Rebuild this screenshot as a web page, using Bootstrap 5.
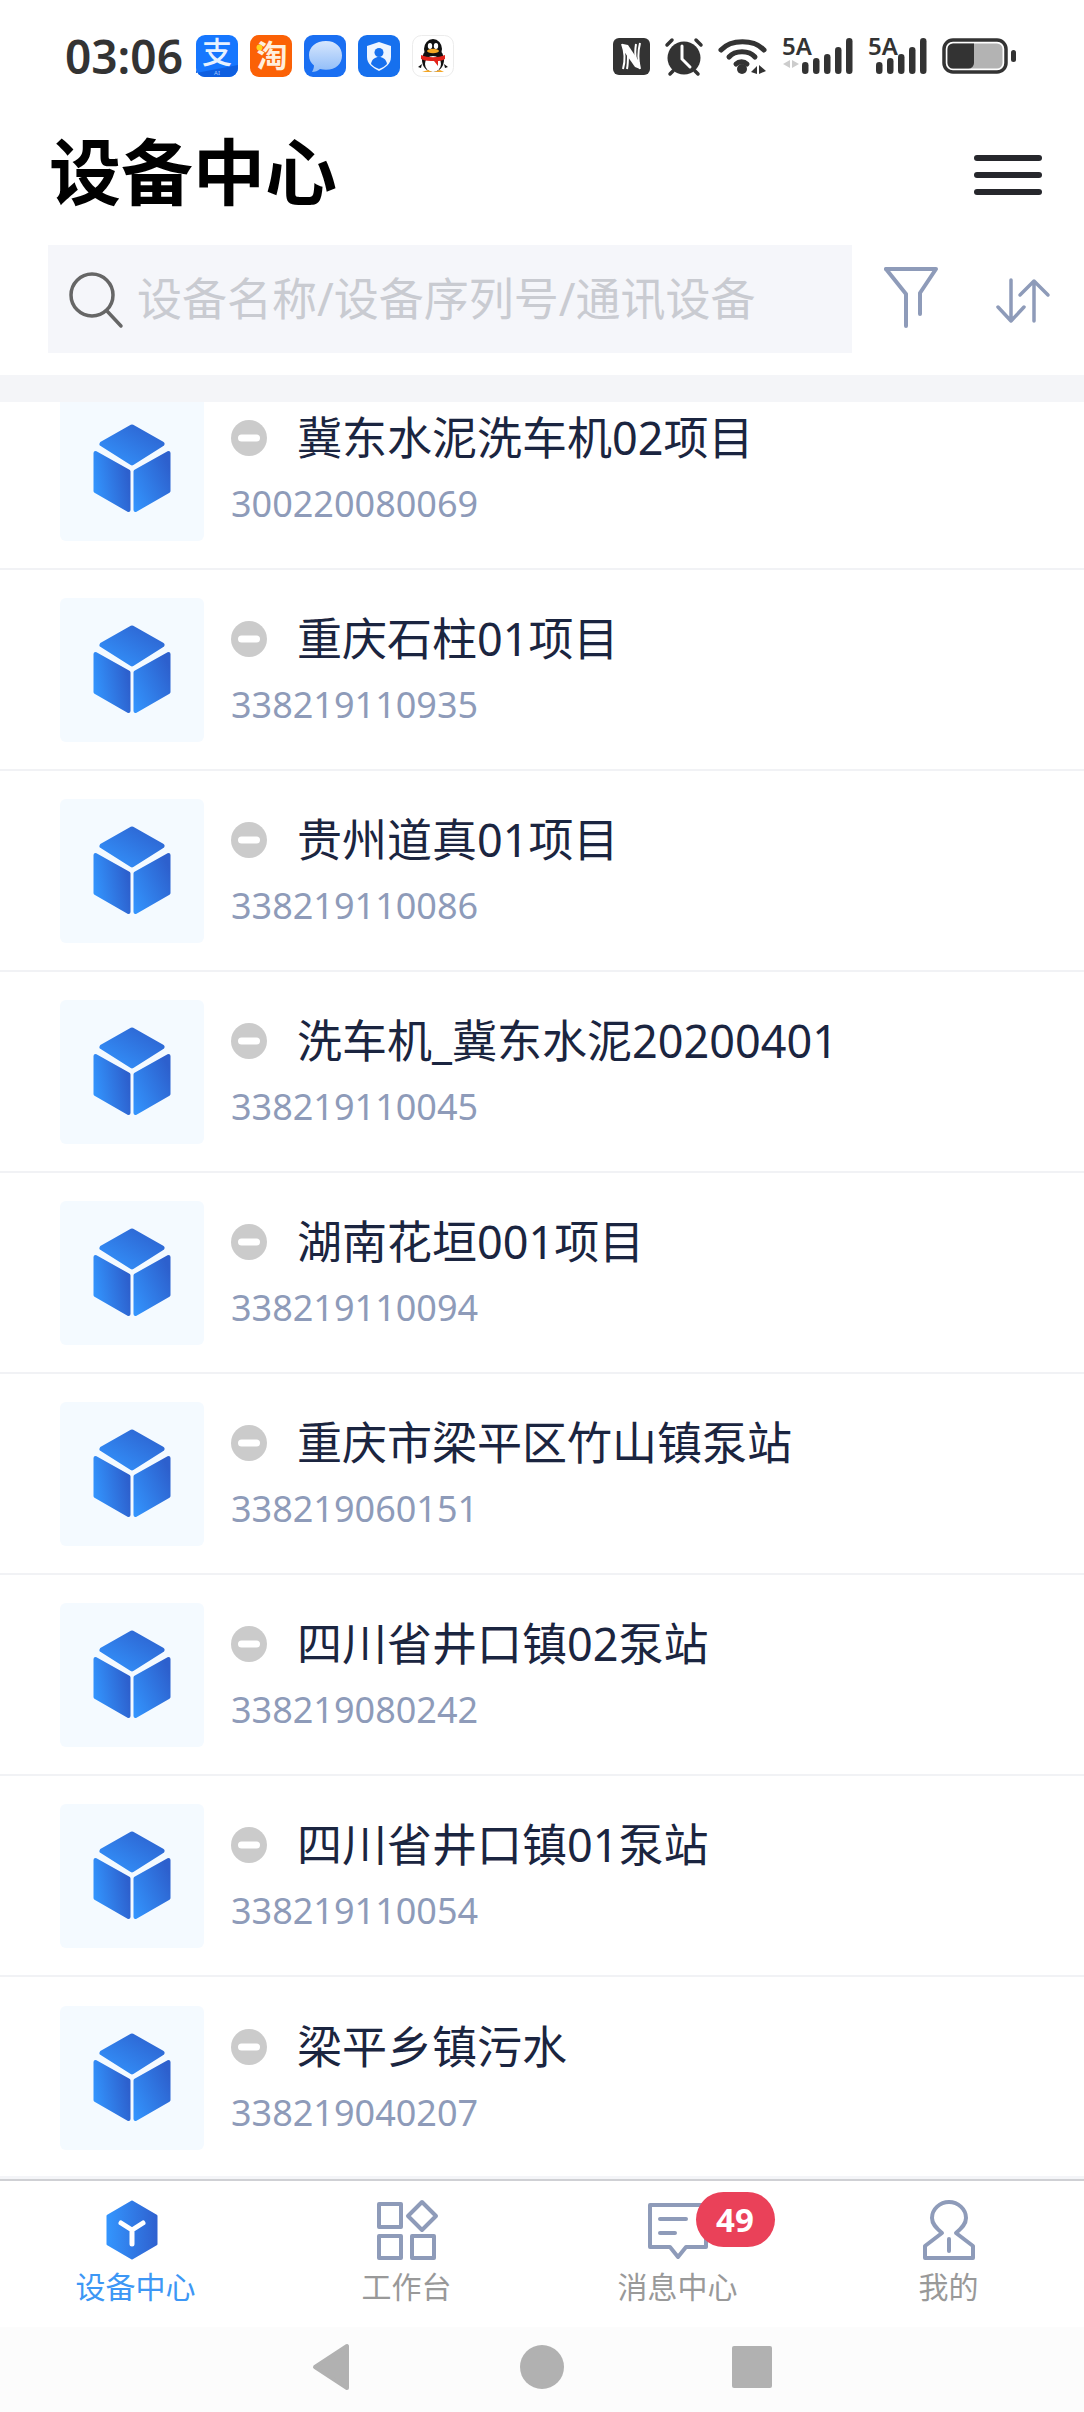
<!DOCTYPE html>
<html lang="zh">
<head>
  <meta charset="UTF-8" />
  <link rel="stylesheet" href="https://cdn.jsdelivr.net/npm/bootstrap@5.3.3/dist/css/bootstrap.min.css">
  <script src="https://cdn.jsdelivr.net/npm/bootstrap@5.3.3/dist/js/bootstrap.bundle.min.js"></script>
  <title>设备中心</title>
  <style>
    body { background: #fff; font-family: "Noto Sans", "Noto Sans CJK SC", sans-serif; overflow: hidden; }
    svg { overflow: visible; }
    .phone { width: 1084px; height: 2412px; }
    .status-bar { height: 112px; padding: 0 67px 0 65px; color: #333; }
    .status-time { font-size: 46px; font-weight: 600; width: 131px; line-height: 1; }
    .app-ico { width: 42px; height: 42px; margin-right: 12px; display: block; }
    .sys-ico { display: block; margin-left: 15px; }
    .title-bar { height: 133px; padding: 0 42px 16px 49px; }
    .page-title { font-size: 72px; font-weight: 700; color: #000; margin: 0; line-height: 1; }
    .menu-btn { width: 68px; margin-top: 8px; }
    .menu-btn span { display: block; height: 6px; border-radius: 3px; background: #26272c; margin: 11px 0; }
    .search-row { padding: 0 34px 0 48px; height: 130px; }
    .search-box { width: 804px; height: 108px; background: #f5f6fa; padding-left: 20px; }
    .search-text { font-size: 45px; color: #c9cbd1; margin-left: 13px; line-height: 1; padding-bottom: 2px; }
    .filter-ico { margin-top: 21px; margin-left: auto; }
    .sort-ico { margin-top: 34px; margin-left: 58px; }
    .strip { height: 27px; background: #f4f5f8; }
    .dev-list { height: 1777px; overflow: hidden; border-bottom: 3px solid #f4f5f8; }
    .dev-inner { margin-top: -33px; }
    .dev-row { height: 201px; padding: 0 0 0 60px; border-radius: 0; }
    .dev-row.list-group-item { border-width: 0 0 2px; border-color: #f1f2f5; }
    .cube-box { width: 144px; height: 144px; background: #f4faff; border-radius: 6px; }
    .dev-info { margin-left: 27px; padding-bottom: 4px; }
    .dev-name { font-size: 45px; color: #1b2540; line-height: 60px; margin-left: 30px; }
    .dev-sn { font-size: 36px; color: #8e9bb9; line-height: 44px; margin-top: 14px; }
    .tab-bar { height: 148px; border-top: 2px solid #cfd0d4; background: #fff; }
    .tab-col { padding-top: 19px; }
    .tab-ico { height: 60px; }
    .hex-ico { margin-right: 7px; }
    .tab-label { font-size: 30px; color: #999; line-height: 40px; margin-top: 7px; }
    .tab-label.on { color: #3d97f5; }
    .msg-badge { left: 48px; top: -8px; width: 79px; height: 55px; background: #ea4159; font-size: 33px; font-weight: 700; line-height: 55px; padding: 0; border-radius: 28px; }
    .sys-nav { height: 85px; background: #fcfcfc; padding-bottom: 6px; }
    .nav-left { margin-left: 312px; }
    .nav-mid { margin-left: 170px; }
    .nav-right { margin-left: 168px; }
  </style>
</head>
<body>
  <svg width="0" height="0" class="position-absolute">
    <defs>
      <linearGradient id="cubeTop" x1="0" y1="1" x2="1" y2="0"><stop offset="0" stop-color="#3394fd"/><stop offset="1" stop-color="#2d60cd"/></linearGradient>
      <linearGradient id="cubeLeft" x1="0" y1="0.75" x2="1" y2="0.45"><stop offset="0" stop-color="#3394fd"/><stop offset="1" stop-color="#2d60cd"/></linearGradient>
      <linearGradient id="cubeRight" x1="0" y1="1" x2="1" y2="0.2"><stop offset="0" stop-color="#3394fd"/><stop offset="1" stop-color="#2d60cd"/></linearGradient>
      <linearGradient id="hexFill" x1="0" y1="0" x2="1" y2="0"><stop offset="0" stop-color="#3394fd"/><stop offset="1" stop-color="#2f62d0"/></linearGradient>
      <linearGradient id="bub" x1="0" y1="0" x2="0" y2="1"><stop offset="0" stop-color="#d6e6fd"/><stop offset="1" stop-color="#8fbcf8"/></linearGradient>
      <symbol id="cube" viewBox="0 0 78 90">
        <path d="M39 3 69 20 39 39 9 20Z" fill="url(#cubeTop)" stroke="url(#cubeTop)" stroke-width="5" stroke-linejoin="round"/>
        <path d="M2.500 29 35.500 47.500V86L2.500 67Z" fill="url(#cubeLeft)" stroke="url(#cubeLeft)" stroke-width="4" stroke-linejoin="round"/>
        <path d="M75.500 29 42.500 47.500V86L75.500 67Z" fill="url(#cubeRight)" stroke="url(#cubeRight)" stroke-width="4" stroke-linejoin="round"/>
      </symbol>
      <symbol id="minus" viewBox="0 0 36 36">
        <circle cx="18" cy="18" r="18" fill="#cbcbcb"/>
        <rect x="7" y="14.500" width="22" height="7" rx="3.500" fill="#fff"/>
      </symbol>
      <symbol id="signal" viewBox="0 0 51 36">
        <rect x="0" y="24" width="6.500" height="12" rx="3.250"/><rect x="11" y="20" width="6.500" height="16" rx="3.250"/><rect x="22" y="16" width="6.500" height="20" rx="3.250"/><rect x="33" y="9" width="6.500" height="27" rx="3.250"/><rect x="44" y="0" width="6.500" height="36" rx="3.250"/>
      </symbol>
    </defs>
  </svg>

  <div class="phone d-flex flex-column">
    <!-- status bar -->
    <div class="status-bar d-flex align-items-center">
      <div class="status-time">03:06</div>
      <svg class="app-ico" viewBox="0 0 42 42"><rect width="42" height="42" rx="9" fill="#1677ff"/><path d="M0 38 42 30V33a9 9 0 0 1-9 9H9a9 9 0 0 1-9-9Z" fill="#0f5fe0"/><text x="21" y="28" font-size="30" fill="#e8f2ff" text-anchor="middle" font-family="Noto Sans CJK SC" font-weight="500">支</text><text x="21" y="40" font-size="6" fill="#a8c8ff" text-anchor="middle" font-family="Noto Sans">AI</text></svg>
      <svg class="app-ico" viewBox="0 0 42 42"><rect width="42" height="42" rx="9" fill="#fb6106"/><text x="22" y="32" font-size="31" font-weight="700" fill="#ffeedd" text-anchor="middle" font-family="Noto Sans CJK SC">淘</text><circle cx="9.500" cy="12.500" r="3" fill="#ffd21e"/></svg>
      <svg class="app-ico" viewBox="0 0 42 42"><rect width="42" height="42" rx="9" fill="#1a6ff2"/><path d="M22 6C12 6 5 12 5 20c0 5 2 8 5 10.500C10 33 9 35 8 37c3 0 6-1 8-3 2 .5 4 .8 6 .8 10 0 16-6 16-14.300S32 6 22 6Z" fill="url(#bub)"/></svg>
      <svg class="app-ico" viewBox="0 0 42 42"><rect width="42" height="42" rx="9" fill="#1670ee"/><path d="M21 7 33 11V22C33 29 27 33 21 36 15 33 9 29 9 22V11Z" fill="#eef5ff"/><circle cx="21" cy="17.500" r="4.500" fill="#1670ee"/><path d="M13 29c1-5 4-7 8-7s7 2 8 7c-2 2-5 4-8 5-3-1-6-3-8-5Z" fill="#1670ee"/></svg>
      <svg class="app-ico" viewBox="0 0 42 42"><rect x=".5" y=".5" width="41" height="41" rx="9" fill="#fff" stroke="#ececec"/><ellipse cx="21" cy="25" rx="11" ry="12" fill="#111"/><ellipse cx="21" cy="14" rx="9" ry="10" fill="#111"/><path d="M10 29 6 32 9 33ZM32 29 36 32 33 33Z" fill="#111"/><ellipse cx="21" cy="29" rx="8" ry="8" fill="#fff"/><ellipse cx="18" cy="11" rx="2.200" ry="3" fill="#fff"/><ellipse cx="24" cy="11" rx="2.200" ry="3" fill="#fff"/><ellipse cx="21" cy="16" rx="6" ry="2.200" fill="#f5a623"/><path d="M9 20C16 23 26 23 33 20L33 24C29 26 27 26 26 26V31L22 26C18 26 13 26 9 24Z" fill="#e2231a"/><path d="M10 37h10l-4-2ZM22 37h10l-4-2Z" fill="#f5a623"/></svg>
      <div class="ms-auto d-flex align-items-center">
        <svg class="sys-ico" width="37" height="37" viewBox="0 0 37 37"><rect width="37" height="37" rx="6" fill="#333"/><path d="M9 6C12 14 12 24 10 31M27 5C25 13 25 23 27 31" fill="none" stroke="#fff" stroke-width="2"/><path d="M10 6 15 7 27 25 27 31 22 29 10 12Z" fill="#fff"/><path d="M15 16C15 22 15 26 14 31M23 6C22 12 22 17 23 21" fill="none" stroke="#fff" stroke-width="2"/></svg>
        <svg class="sys-ico" width="38" height="39" viewBox="0 0 38 39"><circle cx="19" cy="21" r="16.500" fill="#333"/><path d="M2 8 7 3M36 8 31 3M5 37 8 34M33 37 30 34" stroke="#333" stroke-width="3.500" stroke-linecap="round"/><path d="M17 9V22L25 30" fill="none" stroke="#fff" stroke-width="3" stroke-linecap="round"/></svg>
        <svg class="sys-ico" width="49" height="35" viewBox="0 0 49 35" fill="none" stroke="#333" stroke-width="5" stroke-linecap="round"><path d="M3 11C13 0 36 0 46 11"/><path d="M11 18C17 11 31 11 37 18"/><path d="M18 25C21 22 26 22 29 25"/><circle cx="24" cy="30" r="5" fill="#333" stroke="none"/><path d="M33 33 39 27V35ZM48 32 41 26V35Z" fill="#333" stroke="none"/></svg>
        <svg class="sys-ico" width="71" height="36" viewBox="0 0 71 36"><text x="0" y="17" font-size="24" font-weight="600" fill="#333" font-family="Noto Sans">5A</text><path d="M8 22V30L1 26ZM10 22 17 26 10 30Z" fill="#ccc"/><use href="#signal" x="20" y="0" width="51" height="36" fill="#333"/></svg>
        <svg class="sys-ico" width="59" height="36" viewBox="0 0 59 36"><text x="0" y="17" font-size="24" font-weight="600" fill="#333" font-family="Noto Sans">5A</text><use href="#signal" x="8" y="0" width="51" height="36" fill="#333"/></svg>
        <svg class="sys-ico" width="75" height="36" viewBox="0 0 75 36"><rect x="2" y="2" width="62" height="32" rx="9" fill="none" stroke="#333" stroke-width="3.500"/><rect x="5.500" y="5.500" width="55" height="25" rx="5.500" fill="#b3b3b3"/><path d="M11 5.500H32V25a5.500 5.500 0 0 1-5.500 5.500H11a5.500 5.500 0 0 1-5.500-5.500V11A5.500 5.500 0 0 1 11 5.500Z" fill="#333"/><rect x="69" y="12" width="5" height="12" rx="2.500" fill="#333"/></svg>
      </div>
    </div>

    <!-- title -->
    <div class="title-bar d-flex align-items-center justify-content-between">
      <h1 class="page-title">设备中心</h1>
      <div class="menu-btn"><span></span><span></span><span></span></div>
    </div>

    <!-- search -->
    <div class="search-row d-flex align-items-start">
      <div class="search-box d-flex align-items-center">
        <svg width="56" height="56" viewBox="0 0 56 56" fill="none" stroke="#666" stroke-width="3.500" stroke-linecap="round"><circle cx="24" cy="24" r="21"/><path d="M39 40 53 55"/></svg>
        <span class="search-text">设备名称/设备序列号/通讯设备</span>
      </div>
      <svg class="filter-ico" width="54" height="62" viewBox="0 0 54 62" fill="none" stroke="#8e9bb9" stroke-width="4" stroke-linecap="round" stroke-linejoin="round"><path d="M2 3H52L36 27V48"/><path d="M2 3 22 28V60"/></svg>
      <svg class="sort-ico" width="54" height="44" viewBox="0 0 54 44" fill="none" stroke="#8e9bb9" stroke-width="3.500" stroke-linecap="round" stroke-linejoin="round"><path d="M15 1V42M2 28 15 42 28 28"/><path d="M38 42V2M24 16 38 2 52 16"/></svg>
    </div>
    <div class="strip"></div>

    <!-- device list -->
    <div class="dev-list">
      <div class="dev-inner list-group list-group-flush" id="devList"></div>
    </div>

    <!-- tabs -->
    <div class="tab-bar row g-0 text-center">
      <div class="col-3 tab-col">
        <svg class="tab-ico hex-ico" width="52" height="60" viewBox="0 0 52 60"><path d="M26 2 50 16V44L26 58 2 44V16Z" fill="url(#hexFill)" stroke="url(#hexFill)" stroke-width="3" stroke-linejoin="round"/><path d="M15 23 26 30 37 23M26 30V44" fill="none" stroke="#fff" stroke-width="5" stroke-linecap="round" stroke-linejoin="round"/></svg>
        <div class="tab-label on">设备中心</div>
      </div>
      <div class="col-3 tab-col">
        <svg class="tab-ico" width="60" height="60" viewBox="0 0 60 60" fill="none" stroke="#8e9bb9" stroke-width="4" stroke-linejoin="round"><rect x="2" y="4" width="22" height="23"/><path d="M45 2 59 16 45 30 31 16Z"/><rect x="2" y="36" width="22" height="22"/><rect x="35" y="36" width="22" height="22"/></svg>
        <div class="tab-label">工作台</div>
      </div>
      <div class="col-3 tab-col">
        <div class="d-inline-block position-relative tab-ico">
          <svg width="60" height="60" viewBox="0 0 60 60" fill="none" stroke="#8e9bb9" stroke-width="4" stroke-linejoin="round" stroke-linecap="round"><path d="M2 5H58V47H38L30 57 22 47H2Z"/><path d="M12 19H38M12 33H27"/></svg>
          <span class="badge msg-badge position-absolute text-white">49</span>
        </div>
        <div class="tab-label">消息中心</div>
      </div>
      <div class="col-3 tab-col">
        <svg class="tab-ico" width="54" height="60" viewBox="0 0 54 60" fill="none" stroke="#8e9bb9" stroke-width="4" stroke-linejoin="round" stroke-linecap="round"><path d="M20 33C14 28 10 24 10 18 10 9 18 2 27 2 36 2 44 9 44 18 44 24 40 28 34 33L51 46V58H3V46Z"/><path d="M27 39V51"/></svg>
        <div class="tab-label">我的</div>
      </div>
    </div>

    <!-- android nav -->
    <div class="sys-nav d-flex align-items-center">
      <svg class="nav-left" width="38" height="48" viewBox="0 0 38 48"><path d="M35 3V45L3 24Z" fill="#b1b1b1" stroke="#b1b1b1" stroke-width="4" stroke-linejoin="round"/></svg>
      <svg class="nav-mid" width="44" height="44" viewBox="0 0 44 44"><circle cx="22" cy="22" r="22" fill="#b1b1b1"/></svg>
      <svg class="nav-right" width="40" height="42" viewBox="0 0 40 42"><rect width="40" height="42" rx="2" fill="#b1b1b1"/></svg>
    </div>
  </div>

  <script>
    const devices = [
      ['冀东水泥洗车机02项目', '300220080069'],
      ['重庆石柱01项目', '338219110935'],
      ['贵州道真01项目', '338219110086'],
      ['洗车机_冀东水泥20200401', '338219110045'],
      ['湖南花垣001项目', '338219110094'],
      ['重庆市梁平区竹山镇泵站', '338219060151'],
      ['四川省井口镇02泵站', '338219080242'],
      ['四川省井口镇01泵站', '338219110054'],
      ['梁平乡镇污水', '338219040207']
    ];
    document.getElementById('devList').innerHTML = devices.map(([name, sn]) => `
      <div class="list-group-item dev-row d-flex align-items-center">
        <div class="cube-box d-flex align-items-center justify-content-center">
          <svg width="78" height="90"><use href="#cube"/></svg>
        </div>
        <div class="dev-info">
          <div class="d-flex align-items-center">
            <svg width="36" height="36"><use href="#minus"/></svg>
            <span class="dev-name">${name}</span>
          </div>
          <div class="dev-sn">${sn}</div>
        </div>
      </div>`).join('');
  </script>
</body>
</html>
